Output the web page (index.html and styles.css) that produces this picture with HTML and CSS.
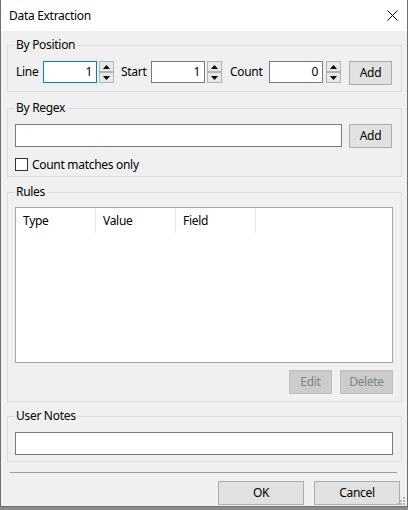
FILE: index.html
```html
<!DOCTYPE html>
<html>
<head>
<meta charset="utf-8">
<title>Data Extraction</title>
<link rel="stylesheet" href="styles.css">
</head>
<body>
<div class="window">
  <div class="titlebar">
    <span class="title">Data Extraction</span>
    <svg class="close" width="11" height="11" viewBox="0 0 11 11"><path d="M0.5 0.5 L10.5 10.5 M10.5 0.5 L0.5 10.5" stroke="#000" stroke-width="1" fill="none"/></svg>
  </div>
  <div class="content">
    <fieldset class="group g-pos">
      <legend>By Position</legend>
      <div class="pos-row">
        <span class="lbl lbl-line">Line</span>
        <div class="num focused">1</div>
        <div class="spin">
          <span class="spin-btn"><svg width="7" height="4" viewBox="0 0 7 4"><path d="M3.5 0 L7 4 L0 4 Z" fill="#000"/></svg></span>
          <span class="spin-btn"><svg width="7" height="4" viewBox="0 0 7 4"><path d="M0 0 L7 0 L3.5 4 Z" fill="#000"/></svg></span>
        </div>
        <span class="lbl lbl-start">Start</span>
        <div class="num">1</div>
        <div class="spin">
          <span class="spin-btn"><svg width="7" height="4" viewBox="0 0 7 4"><path d="M3.5 0 L7 4 L0 4 Z" fill="#000"/></svg></span>
          <span class="spin-btn"><svg width="7" height="4" viewBox="0 0 7 4"><path d="M0 0 L7 0 L3.5 4 Z" fill="#000"/></svg></span>
        </div>
        <span class="lbl lbl-count">Count</span>
        <div class="num">0</div>
        <div class="spin spin-last">
          <span class="spin-btn"><svg width="7" height="4" viewBox="0 0 7 4"><path d="M3.5 0 L7 4 L0 4 Z" fill="#000"/></svg></span>
          <span class="spin-btn"><svg width="7" height="4" viewBox="0 0 7 4"><path d="M0 0 L7 0 L3.5 4 Z" fill="#000"/></svg></span>
        </div>
        <button class="btn btn-add btn-pos">Add</button>
      </div>
    </fieldset>

    <fieldset class="group g-regex">
      <legend>By Regex</legend>
      <div class="regex-row">
        <div class="textbox regex-input"></div>
        <button class="btn btn-add">Add</button>
      </div>
      <div class="check-row">
        <span class="checkbox"></span>
        <span class="check-label">Count matches only</span>
      </div>
    </fieldset>

    <fieldset class="group g-rules">
      <legend>Rules</legend>
      <div class="listview">
        <div class="lv-header">
          <div class="col">Type</div>
          <div class="col">Value</div>
          <div class="col">Field</div>
        </div>
      </div>
      <div class="rules-actions">
        <button class="btn btn-disabled btn-edit">Edit</button>
        <button class="btn btn-disabled btn-delete">Delete</button>
      </div>
    </fieldset>

    <fieldset class="group g-notes">
      <legend>User Notes</legend>
      <div class="textbox notes-input"></div>
    </fieldset>

    <div class="separator"></div>

    <div class="dialog-actions">
      <button class="btn btn-dialog">OK</button>
      <button class="btn btn-dialog">Cancel</button>
    </div>
  </div>
  <svg class="grip" width="8" height="8" viewBox="0 0 8 8">
    <rect x="6" y="0" width="2" height="2" fill="#b5b5b5"/>
    <rect x="3" y="3" width="2" height="2" fill="#b5b5b5"/>
    <rect x="6" y="3" width="2" height="2" fill="#b5b5b5"/>
    <rect x="0" y="6" width="2" height="2" fill="#b5b5b5"/>
    <rect x="3" y="6" width="2" height="2" fill="#b5b5b5"/>
    <rect x="6" y="6" width="2" height="2" fill="#b5b5b5"/>
  </svg>
</div>
<div class="desk"></div>
</body>
</html>
```

FILE: styles.css
```css
html, body {
  margin: 0;
  padding: 0;
  width: 408px;
  height: 510px;
  overflow: hidden;
  background: #9a9a9a;
  font-family: "Noto Sans", "Open Sans", sans-serif;
  font-size: 12px;
  letter-spacing: -0.3px;
  color: #000;
}

.window {
  width: 408px;
  height: 507px;
  box-sizing: border-box;
  border-left: 1px solid #6f6f6f;
  border-right: 1px solid #6f6f6f;
  border-bottom: 1px solid #6f6f6f;
  background: #f0f0f0;
  display: flex;
  flex-direction: column;
  position: relative;
  overflow: hidden;
}

.desk {
  height: 3px;
  background: #8c8c8c;
}

.titlebar {
  height: 31px;
  flex: none;
  background: #fff;
  display: flex;
  align-items: center;
  justify-content: space-between;
  padding: 0 10px 0 8px;
  margin: 0 -1px;
  box-sizing: border-box;
}

.title {
  font-size: 12px;
  line-height: 16px;
  padding-left: 1px;
}

.close {
  display: block;
}

.content {
  flex: none;
  padding: 6px 5px 0 6px;
  display: flex;
  flex-direction: column;
}

.group {
  margin: 0;
  border: 1px solid #dcdcdc;
  padding: 8px 8px 6px 7px;
  min-width: 0;
}

.group legend {
  padding: 0 2px;
  margin-left: -1px;
  line-height: 16px;
  height: 16px;
}

.g-regex { margin-top: 8px; padding-bottom: 5px; }
.g-rules { margin-top: 7px; padding-top: 7px; padding-bottom: 7px; }
.g-notes { margin-top: 6px; padding-bottom: 6px; }

.pos-row {
  display: flex;
  align-items: flex-start;
  height: 24px;
}

.lbl {
  box-sizing: border-box;
  line-height: 22px;
  height: 22px;
  white-space: nowrap;
}
.lbl-line { width: 28px; padding-left: 1px; }
.lbl-start { width: 37px; padding-left: 7px; }
.lbl-count { width: 47px; padding-left: 8px; }

.num {
  width: 54px;
  height: 22px;
  box-sizing: border-box;
  border: 1px solid #7a7a7a;
  background: #fff;
  text-align: right;
  padding-right: 4px;
  line-height: 20px;
}
.num.focused { border-color: #0078d7; }

.spin {
  margin-left: 2px;
  width: 15px;
  height: 22px;
  display: flex;
  flex-direction: column;
  justify-content: space-between;
}
.spin-last { margin-left: 3px; }

.spin-btn {
  height: 11px;
  box-sizing: border-box;
  border: 1px solid #b4b4b4;
  background: #e8e8e8;
  display: flex;
  align-items: center;
  justify-content: center;
}

.btn {
  font-family: inherit;
  font-size: 12px;
  letter-spacing: -0.3px;
  color: #000;
  background: #e1e1e1;
  border: 1px solid #adadad;
  height: 24px;
  padding: 0;
  margin: 0;
  box-sizing: border-box;
  line-height: 20px;
}

.btn-add { width: 43px; }
.btn-pos { margin-left: 8px; }

.regex-row {
  display: flex;
  align-items: flex-start;
  height: 24px;
}

.textbox {
  background: #fff;
  border: 1px solid #7a7a7a;
  box-sizing: border-box;
  height: 23px;
}

.regex-input {
  width: 327px;
  margin-right: 7px;
}

.check-row {
  margin-top: 10px;
  height: 13px;
  display: flex;
  align-items: center;
}

.checkbox {
  width: 13px;
  height: 13px;
  box-sizing: border-box;
  border: 1px solid #333;
  background: #fff;
}

.check-label {
  margin-left: 4px;
  line-height: 13px;
  white-space: nowrap;
}

.listview {
  height: 156px;
  box-sizing: border-box;
  border: 1px solid #a5a5a5;
  background: #fff;
}

.lv-header {
  display: flex;
  height: 25px;
}

.lv-header .col {
  width: 80px;
  box-sizing: border-box;
  border-right: 1px solid #e5e5e5;
  padding-left: 7px;
  line-height: 25px;
}

.rules-actions {
  margin-top: 7px;
  display: flex;
  justify-content: flex-end;
  gap: 8px;
}

.btn-disabled {
  background: #cccccc;
  border-color: #bfbfbf;
  color: #838383;
}
.btn-edit { width: 43px; }
.btn-delete { width: 53px; }

.notes-input {
  width: 100%;
}

.separator {
  margin: 10px 5px 0 3px;
  height: 1px;
  background: #a0a0a0;
}

.dialog-actions {
  margin-top: 8px;
  display: flex;
  justify-content: flex-end;
  align-items: flex-start;
  gap: 10px;
  padding-right: 2px;
}

.btn-dialog { width: 86px; }

.grip {
  position: absolute;
  right: 2px;
  bottom: 1px;
}
```
